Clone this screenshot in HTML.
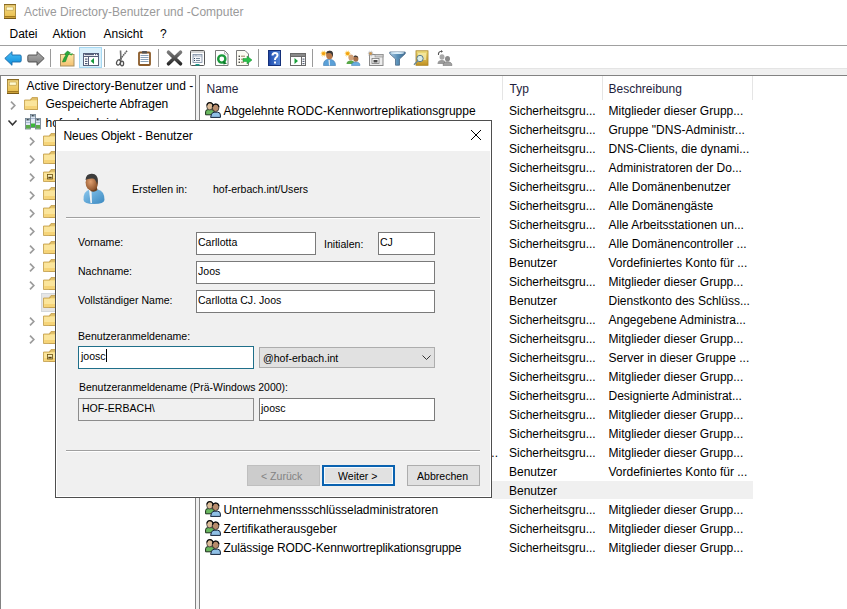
<!DOCTYPE html>
<html><head><meta charset="utf-8">
<style>
*{margin:0;padding:0;box-sizing:border-box}
html,body{width:847px;height:609px;overflow:hidden;background:#fff;font-family:"Liberation Sans",sans-serif;color:#000}
.a{position:absolute}
.x{position:absolute;white-space:nowrap}
svg{position:absolute;overflow:visible}
</style></head><body>
<svg style="left:4px;top:4px" width="12" height="15" viewBox="0 0 12 15">
<defs><linearGradient id="bk0" x1="0" y1="0" x2="0" y2="1"><stop offset="0" stop-color="#f6dc88"/><stop offset="1" stop-color="#e8bc48"/></linearGradient></defs>
<rect x="0.4" y="0.4" width="11.2" height="14.2" fill="url(#bk0)" stroke="#9a7a28" stroke-width="0.8"/>
<rect x="0" y="0" width="12" height="1.2" fill="#8a6a20"/>
<rect x="2.2" y="3" width="7" height="3.2" fill="#fffad0" stroke="#b89848" stroke-width="0.6"/>
<rect x="0.5" y="12" width="11" height="1.4" fill="#a07820"/>
<rect x="0" y="14" width="12" height="1" fill="#7a5a18"/>
</svg>
<div class="x" style="left:24px;top:5.84px;font-size:12px;line-height:12px;color:#9a9a9a;">Active Directory-Benutzer und -Computer</div>
<div class="x" style="left:9.5px;top:27.84px;font-size:12px;line-height:12px;">Datei</div>
<div class="x" style="left:52.5px;top:27.84px;font-size:12px;line-height:12px;">Aktion</div>
<div class="x" style="left:103.5px;top:27.84px;font-size:12px;line-height:12px;">Ansicht</div>
<div class="x" style="left:160px;top:27.84px;font-size:12px;line-height:12px;">?</div>
<div class="a" style="left:0;top:45px;width:847px;height:1px;background:#a0a0a0"></div>
<div class="a" style="left:79px;top:47px;width:23px;height:21px;background:#d9f0fb;border:1px solid #a6d8f2"></div>
<div class="a" style="left:50px;top:49px;width:1px;height:18px;background:#9a9a9a"></div>
<div class="a" style="left:104px;top:49px;width:1px;height:18px;background:#9a9a9a"></div>
<div class="a" style="left:158px;top:49px;width:1px;height:18px;background:#9a9a9a"></div>
<div class="a" style="left:258px;top:49px;width:1px;height:18px;background:#9a9a9a"></div>
<div class="a" style="left:312px;top:49px;width:1px;height:18px;background:#9a9a9a"></div>
<svg style="left:4px;top:51px" width="18" height="15" viewBox="0 0 18 15">
<defs><linearGradient id="ba" x1="0" y1="0" x2="0" y2="1"><stop offset="0" stop-color="#4cc0f8"/><stop offset="1" stop-color="#0a8ad8"/></linearGradient></defs>
<path d="M0.8 7.4 L8 0.7 V4 H16 Q17.2 4 17.2 5.2 V9.8 Q17.2 11 16 11 H8 V14.3 Z" fill="url(#ba)" stroke="#1a6aa8" stroke-width="0.9" stroke-linejoin="round"/>
</svg>
<svg style="left:27px;top:51px" width="18" height="15" viewBox="0 0 18 15">
<defs><linearGradient id="fa" x1="0" y1="0" x2="0" y2="1"><stop offset="0" stop-color="#b0b0b0"/><stop offset="1" stop-color="#7a7a7a"/></linearGradient></defs>
<path d="M17.2 7.4 L10 0.7 V4 H2 Q0.8 4 0.8 5.2 V9.8 Q0.8 11 2 11 H10 V14.3 Z" fill="url(#fa)" stroke="#4a4a4a" stroke-width="0.9" stroke-linejoin="round"/>
</svg>
<svg style="left:60px;top:50px" width="15" height="17" viewBox="0 0 15 17">
<defs><linearGradient id="uf1" x1="0" y1="0" x2="0" y2="1"><stop offset="0" stop-color="#fce9a8"/><stop offset="1" stop-color="#f4c070"/></linearGradient></defs>
<rect x="0.5" y="4.5" width="13.5" height="11.5" fill="url(#uf1)" stroke="#a89060"/>
<path d="M2.5 12 Q3.5 8 6 5 L4.8 3.8 L7.5 1 L10.5 3 L8.8 3.8 Q7 7 5.5 11.5 Z" fill="#2aaa3a" stroke="#138020" stroke-width="0.6"/>
<path d="M9 4.5 L13 3 L11.5 5.5 Z" fill="#2aaa3a"/>
</svg>
<svg style="left:83px;top:53px" width="16" height="13" viewBox="0 0 16 13">
<rect x="0.5" y="0.5" width="15" height="12" fill="#fff" stroke="#56607a"/>
<line x1="1.5" y1="1.6" x2="11" y2="1.6" stroke="#56607a" stroke-width="1.2"/>
<rect x="12" y="1" width="1.2" height="1.2" fill="#56607a"/><rect x="14" y="1" width="1" height="1.2" fill="#56607a"/>
<line x1="1" y1="3.5" x2="15" y2="3.5" stroke="#56607a"/>
<line x1="5.5" y1="4" x2="5.5" y2="12" stroke="#56607a"/>
<rect x="2" y="5.5" width="2.5" height="1.2" fill="#56607a"/><rect x="2" y="7.8" width="2.5" height="1.2" fill="#56607a"/><rect x="2" y="10" width="2.5" height="1.2" fill="#56607a"/>
<path d="M11 5 L7.6 8 L11 11 Z" fill="#12983a"/>
</svg>
<svg style="left:116px;top:50px" width="12" height="16" viewBox="0 0 12 16">
<path d="M4.5 0.5 L5 10.5" stroke="#707070" stroke-width="1.6" fill="none"/>
<path d="M11 0.8 L3.5 10" stroke="#606060" stroke-width="1.6" fill="none" stroke-dasharray="1.6 0.6"/>
<ellipse cx="2.5" cy="12.5" rx="1.9" ry="2.6" fill="none" stroke="#505050" stroke-width="1.3" transform="rotate(25 2.5 12.5)"/>
<ellipse cx="6" cy="13.5" rx="1.6" ry="2.3" fill="none" stroke="#505050" stroke-width="1.3"/>
</svg>
<svg style="left:138px;top:50px" width="13" height="16" viewBox="0 0 13 16">
<rect x="1" y="2.5" width="11" height="12.5" rx="0.8" fill="#fff" stroke="#8a5a28" stroke-width="1.8"/>
<rect x="4" y="1" width="5" height="2.6" rx="0.6" fill="#555"/>
<line x1="2.5" y1="5.5" x2="10.5" y2="5.5" stroke="#8aa2b8"/><line x1="2.5" y1="7.5" x2="10.5" y2="7.5" stroke="#8aa2b8"/><line x1="2.5" y1="9.5" x2="10.5" y2="9.5" stroke="#8aa2b8"/><line x1="2.5" y1="11.5" x2="10.5" y2="11.5" stroke="#8aa2b8"/>
</svg>
<svg style="left:166px;top:50px" width="17" height="16" viewBox="0 0 17 16">
<defs><linearGradient id="xg" x1="0" y1="0" x2="0" y2="1"><stop offset="0" stop-color="#7a7a7a"/><stop offset="1" stop-color="#2a2a2a"/></linearGradient></defs>
<path d="M2.5 2.2 L14.5 13.8 M14.5 2.2 L2.5 13.8" stroke="url(#xg)" stroke-width="3.6" stroke-linecap="round"/>
</svg>
<svg style="left:190px;top:50px" width="15" height="16" viewBox="0 0 15 16">
<rect x="0.5" y="0.5" width="14" height="15" rx="1" fill="#fff" stroke="#555"/>
<line x1="1" y1="2" x2="14" y2="2" stroke="#aaa"/>
<rect x="3" y="4.5" width="9" height="8" fill="#f4f6fa" stroke="#7a8aa0" stroke-width="0.8"/>
<line x1="6" y1="4.5" x2="6" y2="6" stroke="#7a8aa0" stroke-width="0.6"/><line x1="3" y1="6" x2="12" y2="6" stroke="#7a8aa0" stroke-width="0.6"/>
<rect x="4" y="8" width="1" height="1" fill="#345"/><rect x="4" y="10" width="1" height="1" fill="#345"/>
<line x1="6" y1="8.5" x2="10" y2="8.5" stroke="#789"/><line x1="6" y1="10.5" x2="10" y2="10.5" stroke="#789"/>
<rect x="5.5" y="14" width="4" height="1.6" fill="#1a9a8a"/>
</svg>
<svg style="left:215px;top:50px" width="14" height="16" viewBox="0 0 14 16">
<path d="M0.5 0.5 H9.5 L13 4 V15.5 H0.5 Z" fill="#fff" stroke="#7a7a7a"/>
<path d="M9.5 0.5 V4 H13" fill="none" stroke="#aaa" stroke-width="0.8"/>
<circle cx="6.8" cy="9" r="3.6" fill="none" stroke="#1a9a3a" stroke-width="2.4"/>
<path d="M8 10.5 L12 13.5 L8.5 14.5 Z" fill="#0a7a2a"/>
</svg>
<svg style="left:236px;top:50px" width="17" height="16" viewBox="0 0 17 16">
<path d="M0.5 0.5 H9 L12.5 4 V15.5 H0.5 Z" fill="#fdfcf4" stroke="#7a7a7a"/>
<rect x="2.6" y="5.6" width="1.3" height="1.3" fill="#222"/><rect x="2.6" y="8.6" width="1.3" height="1.3" fill="#222"/><rect x="2.6" y="11.6" width="1.3" height="1.3" fill="#222"/>
<line x1="5" y1="6.2" x2="9" y2="6.2" stroke="#a08060"/><line x1="5" y1="9.2" x2="8" y2="9.2" stroke="#a08060"/><line x1="5" y1="12.2" x2="8" y2="12.2" stroke="#a08060"/>
<path d="M7 8.5 H11 V6 L16 10 L11 14 V11.5 H7 Z" fill="#2ac048" stroke="#159030" stroke-width="0.5"/>
</svg>
<svg style="left:268px;top:50px" width="13" height="16" viewBox="0 0 13 16">
<defs><linearGradient id="hg" x1="0" y1="0" x2="1" y2="0"><stop offset="0" stop-color="#1a3a98"/><stop offset="0.25" stop-color="#2a5ab8"/><stop offset="1" stop-color="#5a8ad8"/></linearGradient></defs>
<rect x="0" y="0" width="13" height="16" fill="url(#hg)"/>
<rect x="0.5" y="0.5" width="12" height="15" fill="none" stroke="#14307a"/>
<path d="M4.5 5.5 Q4.5 3 7 3 Q9.5 3 9.5 5.3 Q9.5 6.8 8 7.6 Q7 8.2 7 10" fill="none" stroke="#fff" stroke-width="2"/>
<rect x="6" y="11.5" width="2" height="2" fill="#fff"/>
</svg>
<svg style="left:290px;top:53px" width="16" height="13" viewBox="0 0 16 13">
<rect x="0.5" y="0.5" width="15" height="12" fill="#fff" stroke="#6a6a6a"/>
<rect x="1" y="1" width="14" height="2" fill="#8a8a8a"/>
<line x1="1" y1="3.5" x2="15" y2="3.5" stroke="#6a6a6a"/>
<line x1="11.5" y1="4" x2="11.5" y2="12" stroke="#6a6a6a"/>
<rect x="12.5" y="5.5" width="2" height="1.2" fill="#5a6478"/><rect x="12.5" y="7.8" width="2" height="1.2" fill="#5a6478"/><rect x="12.5" y="10" width="2" height="1.2" fill="#5a6478"/>
<path d="M4.5 5 L8 8 L4.5 11 Z" fill="#1aa03a"/>
</svg>
<svg style="left:320px;top:50px" width="17" height="16" viewBox="0 0 17 16">
<path d="M3.5 15.5 Q3 9.5 9 9.2 Q15.5 9.5 15.5 15.5 Z" fill="#5aa0d8" stroke="#3a78b0" stroke-width="0.6"/>
<path d="M8.5 10 L9 15.5 L10 15.5 L9.8 10 Z" fill="#eee"/>
<ellipse cx="9.5" cy="5" rx="3.4" ry="4.2" fill="#b87848"/>
<path d="M6 4 Q6.5 0.5 10 0.8 Q13.5 1 13 5.5 L12.5 7 Q12 3 9.5 3 Q7 3 6 4 Z" fill="#3a3a3a"/>
<polygon points="7.20,3.60 5.04,4.07 6.51,5.72 4.49,4.82 4.71,7.02 3.60,5.11 2.49,7.02 2.71,4.82 0.69,5.72 2.16,4.07 0.00,3.60 2.16,3.13 0.69,1.48 2.71,2.38 2.49,0.18 3.60,2.09 4.71,0.18 4.49,2.38 6.51,1.48 5.04,3.13" fill="#f8b818"/><circle cx="3.6" cy="3.6" r="1.44" fill="#f09010" opacity="0.6"/>
</svg>
<svg style="left:344px;top:50px" width="17" height="16" viewBox="0 0 17 16">
<ellipse cx="7" cy="7.5" rx="2.6" ry="3" fill="#d0a078"/>
<path d="M2.5 14 Q2.5 10.5 7 10.5 Q10 10.5 10.5 13 V14 Z" fill="#58a848"/>
<ellipse cx="11.8" cy="8.8" rx="2.6" ry="3" fill="#a87048"/>
<path d="M7.5 15.5 Q7.5 12 11.8 12 Q16 12 16 15.5 Z" fill="#6aaee0" stroke="#3a78b0" stroke-width="0.5"/>
<path d="M9.5 7 Q10 5.5 11.8 5.6 Q14 5.8 14 8 Q13 6.8 11.5 6.8 Z" fill="#333"/>
<polygon points="7.20,3.60 5.04,4.07 6.51,5.72 4.49,4.82 4.71,7.02 3.60,5.11 2.49,7.02 2.71,4.82 0.69,5.72 2.16,4.07 0.00,3.60 2.16,3.13 0.69,1.48 2.71,2.38 2.49,0.18 3.60,2.09 4.71,0.18 4.49,2.38 6.51,1.48 5.04,3.13" fill="#f8b818"/><circle cx="3.6" cy="3.6" r="1.44" fill="#f09010" opacity="0.6"/>
</svg>
<svg style="left:367px;top:50px" width="17" height="16" viewBox="0 0 17 16">
<rect x="2.5" y="4.5" width="13.5" height="11" fill="#ececec" stroke="#8a8a8a"/>
<rect x="8" y="4.5" width="8" height="2.5" fill="#d0d0d0" stroke="#8a8a8a" stroke-width="0.6"/>
<rect x="5" y="8.5" width="7" height="5" fill="#f8f8f8" stroke="#7a7a7a" stroke-width="0.8"/>
<rect x="6.5" y="10" width="4" height="2.5" fill="#4a4a4a"/>
<polygon points="7.00,3.60 4.96,4.04 6.35,5.60 4.44,4.76 4.65,6.83 3.60,5.03 2.55,6.83 2.76,4.76 0.85,5.60 2.24,4.04 0.20,3.60 2.24,3.16 0.85,1.60 2.76,2.44 2.55,0.37 3.60,2.17 4.65,0.37 4.44,2.44 6.35,1.60 4.96,3.16" fill="#a0a0a0"/><circle cx="3.6" cy="3.6" r="1.36" fill="#f09010" opacity="0.6"/>
</svg>
<svg style="left:389px;top:51px" width="17" height="15" viewBox="0 0 17 15">
<defs><linearGradient id="flg" x1="0" y1="0" x2="1" y2="0"><stop offset="0" stop-color="#a8c8e0"/><stop offset="0.5" stop-color="#5a90b8"/><stop offset="1" stop-color="#3a6a90"/></linearGradient></defs>
<path d="M0.8 1 H16.2 V2.8 L10.5 8 V14.2 H6.5 V8 L0.8 2.8 Z" fill="url(#flg)" stroke="#4a6a88" stroke-width="0.8"/>
<ellipse cx="8.5" cy="2" rx="7" ry="0.9" fill="#d8ecf8"/>
</svg>
<svg style="left:413px;top:50px" width="16" height="16" viewBox="0 0 16 16">
<defs><linearGradient id="fdg" x1="0" y1="0" x2="0" y2="1"><stop offset="0" stop-color="#f0e080"/><stop offset="1" stop-color="#c09020"/></linearGradient></defs>
<rect x="3" y="0.8" width="12" height="14.5" fill="url(#fdg)" stroke="#a88020" stroke-width="0.8"/>
<rect x="5" y="3" width="8" height="7" fill="#f8f0b0" opacity="0.7"/>
<circle cx="7" cy="8.5" r="3.2" fill="#d8ece8" stroke="#5a7a8a" stroke-width="1"/>
<line x1="4.8" y1="10.8" x2="1" y2="14.8" stroke="#6a8a9a" stroke-width="1.3"/>
</svg>
<svg style="left:436px;top:50px" width="17" height="16" viewBox="0 0 17 16">
<path d="M2.5 5 Q2 1.5 5.5 1.2" fill="none" stroke="#555" stroke-width="1.1"/>
<path d="M5 0 L7 1.4 L5 2.8 Z" fill="#555"/>
<ellipse cx="6" cy="7" rx="2.5" ry="2.8" fill="#a8a8a8"/>
<path d="M1.5 14 Q1.5 10 6 10 Q9.5 10 9.5 13 V14 Z" fill="#9a9a9a"/>
<ellipse cx="11.5" cy="8.8" rx="2.5" ry="2.8" fill="#8a8a8a"/>
<path d="M7 15.5 Q7 11.8 11.5 11.8 Q16 11.8 16 15.5 Z" fill="#a0a0a0" stroke="#6a6a6a" stroke-width="0.5"/>
</svg>
<div class="a" style="left:0;top:68px;width:847px;height:7px;background:#f0f0f0;border-top:1px solid #e4e4e4"></div>
<div class="a" style="left:0;top:75px;width:196px;height:534px;border-left:1px solid #828282;border-top:1px solid #828282;border-right:1px solid #828282"></div>
<div class="a" style="left:196px;top:75px;width:3px;height:534px;background:#f0f0f0"></div>
<div class="a" style="left:199px;top:75px;width:648px;height:534px;border-left:1px solid #828282;border-top:1px solid #828282"></div>
<svg style="left:7px;top:79px" width="12" height="15" viewBox="0 0 12 15">
<defs><linearGradient id="bk" x1="0" y1="0" x2="0" y2="1"><stop offset="0" stop-color="#f6dc88"/><stop offset="1" stop-color="#e8bc48"/></linearGradient></defs>
<rect x="0.4" y="0.4" width="11.2" height="14.2" fill="url(#bk)" stroke="#9a7a28" stroke-width="0.8"/>
<rect x="0" y="0" width="12" height="1.2" fill="#8a6a20"/>
<rect x="2.2" y="3" width="7" height="3.2" fill="#fffad0" stroke="#b89848" stroke-width="0.6"/>
<rect x="0.5" y="12" width="11" height="1.4" fill="#a07820"/>
<rect x="0" y="14" width="12" height="1" fill="#7a5a18"/>
</svg>
<div class="x" style="left:26.5px;top:79.84px;font-size:12px;line-height:12px;">Active Directory-Benutzer und -</div>
<svg style="left:10px;top:101px" width="6" height="9" viewBox="0 0 6 9"><path d="M1 0.6 L4.8 4.5 L1 8.4" fill="none" stroke="#9c9c9c" stroke-width="1.7"/></svg>
<svg style="left:24px;top:97px" width="14" height="13" viewBox="0 0 14 13">
<path d="M6.5 2.5 L8 0.5 H13.5 V12.5 H6.5 Z" fill="#f2d27a" stroke="#c09a48" stroke-width="0.8"/>
<path d="M0.5 3 H6.5 L8 2 H13.5 V12.5 H0.5 Z" fill="#f7dc86" stroke="#c09a48" stroke-width="0.8"/>
<rect x="1.2" y="4" width="11.6" height="8" fill="#fbe59c"/>
<rect x="1.2" y="9" width="11.6" height="3" fill="#f6d478"/></svg>
<div class="x" style="left:45.5px;top:97.84px;font-size:12px;line-height:12px;">Gespeicherte Abfragen</div>
<svg style="left:8px;top:120px" width="9" height="6" viewBox="0 0 9 6"><path d="M0.5 0.5 L4.5 4.8 L8.5 0.5" fill="none" stroke="#333" stroke-width="1.5"/></svg>
<svg style="left:25px;top:114px" width="16" height="16" viewBox="0 0 16 16">
<g stroke="#6a7a88" stroke-width="0.8">
<rect x="0.5" y="4.5" width="5" height="10.5" fill="#dfe8f4"/>
<rect x="10.5" y="4.5" width="5" height="10.5" fill="#dfe8f4"/>
<rect x="5.5" y="0.5" width="5" height="13" fill="#dfe8f4"/>
</g>
<rect x="1" y="5" width="4" height="1.6" fill="#8aa0b0"/><rect x="11" y="5" width="4" height="1.6" fill="#8aa0b0"/><rect x="6" y="1" width="4" height="1.6" fill="#8aa0b0"/>
<rect x="2" y="5.3" width="1.6" height="0.9" fill="#222"/><rect x="12" y="5.3" width="1.6" height="0.9" fill="#222"/><rect x="7" y="1.3" width="1.6" height="0.9" fill="#222"/>
<rect x="1" y="8" width="4" height="1" fill="#a8b8d0"/><rect x="11" y="8" width="4" height="1" fill="#a8b8d0"/><rect x="6" y="4" width="4" height="1" fill="#a8b8d0"/>
<rect x="1" y="11" width="4" height="3.6" fill="#5aaa48"/><rect x="11" y="11" width="4" height="3.6" fill="#5aaa48"/><rect x="6" y="9.5" width="4" height="3.6" fill="#3ab838"/>
</svg>
<div class="x" style="left:45.5px;top:116.64px;font-size:12px;line-height:12px;">hof-erbach.int</div>
<svg style="left:29px;top:137px" width="6" height="9" viewBox="0 0 6 9"><path d="M1 0.6 L4.8 4.5 L1 8.4" fill="none" stroke="#9c9c9c" stroke-width="1.7"/></svg>
<svg style="left:43px;top:133px" width="14" height="13" viewBox="0 0 14 13">
<path d="M6.5 2.5 L8 0.5 H13.5 V12.5 H6.5 Z" fill="#f2d27a" stroke="#c09a48" stroke-width="0.8"/>
<path d="M0.5 3 H6.5 L8 2 H13.5 V12.5 H0.5 Z" fill="#f7dc86" stroke="#c09a48" stroke-width="0.8"/>
<rect x="1.2" y="4" width="11.6" height="8" fill="#fbe59c"/>
<rect x="1.2" y="9" width="11.6" height="3" fill="#f6d478"/></svg>
<svg style="left:29px;top:155px" width="6" height="9" viewBox="0 0 6 9"><path d="M1 0.6 L4.8 4.5 L1 8.4" fill="none" stroke="#9c9c9c" stroke-width="1.7"/></svg>
<svg style="left:43px;top:151px" width="14" height="13" viewBox="0 0 14 13">
<path d="M6.5 2.5 L8 0.5 H13.5 V12.5 H6.5 Z" fill="#f2d27a" stroke="#c09a48" stroke-width="0.8"/>
<path d="M0.5 3 H6.5 L8 2 H13.5 V12.5 H0.5 Z" fill="#f7dc86" stroke="#c09a48" stroke-width="0.8"/>
<rect x="1.2" y="4" width="11.6" height="8" fill="#fbe59c"/>
<rect x="1.2" y="9" width="11.6" height="3" fill="#f6d478"/></svg>
<svg style="left:29px;top:173px" width="6" height="9" viewBox="0 0 6 9"><path d="M1 0.6 L4.8 4.5 L1 8.4" fill="none" stroke="#9c9c9c" stroke-width="1.7"/></svg>
<svg style="left:43px;top:169px" width="14" height="13" viewBox="0 0 14 13">
<path d="M6.5 2.5 L8 0.5 H13.5 V12.5 H6.5 Z" fill="#f2d27a" stroke="#c09a48" stroke-width="0.8"/>
<path d="M0.5 3 H6.5 L8 2 H13.5 V12.5 H0.5 Z" fill="#f7dc86" stroke="#c09a48" stroke-width="0.8"/>
<rect x="1.2" y="4" width="11.6" height="8" fill="#fbe59c"/>
<rect x="1.2" y="9" width="11.6" height="3" fill="#f6d478"/><rect x="4.5" y="5.5" width="5" height="4.5" fill="#f8f0c0" stroke="#6a5010" stroke-width="0.8"/><rect x="5.3" y="7.8" width="3.4" height="1.6" fill="#5a4010"/></svg>
<svg style="left:29px;top:191px" width="6" height="9" viewBox="0 0 6 9"><path d="M1 0.6 L4.8 4.5 L1 8.4" fill="none" stroke="#9c9c9c" stroke-width="1.7"/></svg>
<svg style="left:43px;top:187px" width="14" height="13" viewBox="0 0 14 13">
<path d="M6.5 2.5 L8 0.5 H13.5 V12.5 H6.5 Z" fill="#f2d27a" stroke="#c09a48" stroke-width="0.8"/>
<path d="M0.5 3 H6.5 L8 2 H13.5 V12.5 H0.5 Z" fill="#f7dc86" stroke="#c09a48" stroke-width="0.8"/>
<rect x="1.2" y="4" width="11.6" height="8" fill="#fbe59c"/>
<rect x="1.2" y="9" width="11.6" height="3" fill="#f6d478"/></svg>
<svg style="left:29px;top:209px" width="6" height="9" viewBox="0 0 6 9"><path d="M1 0.6 L4.8 4.5 L1 8.4" fill="none" stroke="#9c9c9c" stroke-width="1.7"/></svg>
<svg style="left:43px;top:205px" width="14" height="13" viewBox="0 0 14 13">
<path d="M6.5 2.5 L8 0.5 H13.5 V12.5 H6.5 Z" fill="#f2d27a" stroke="#c09a48" stroke-width="0.8"/>
<path d="M0.5 3 H6.5 L8 2 H13.5 V12.5 H0.5 Z" fill="#f7dc86" stroke="#c09a48" stroke-width="0.8"/>
<rect x="1.2" y="4" width="11.6" height="8" fill="#fbe59c"/>
<rect x="1.2" y="9" width="11.6" height="3" fill="#f6d478"/></svg>
<svg style="left:29px;top:227px" width="6" height="9" viewBox="0 0 6 9"><path d="M1 0.6 L4.8 4.5 L1 8.4" fill="none" stroke="#9c9c9c" stroke-width="1.7"/></svg>
<svg style="left:43px;top:223px" width="14" height="13" viewBox="0 0 14 13">
<path d="M6.5 2.5 L8 0.5 H13.5 V12.5 H6.5 Z" fill="#f2d27a" stroke="#c09a48" stroke-width="0.8"/>
<path d="M0.5 3 H6.5 L8 2 H13.5 V12.5 H0.5 Z" fill="#f7dc86" stroke="#c09a48" stroke-width="0.8"/>
<rect x="1.2" y="4" width="11.6" height="8" fill="#fbe59c"/>
<rect x="1.2" y="9" width="11.6" height="3" fill="#f6d478"/></svg>
<svg style="left:29px;top:245px" width="6" height="9" viewBox="0 0 6 9"><path d="M1 0.6 L4.8 4.5 L1 8.4" fill="none" stroke="#9c9c9c" stroke-width="1.7"/></svg>
<svg style="left:43px;top:241px" width="14" height="13" viewBox="0 0 14 13">
<path d="M6.5 2.5 L8 0.5 H13.5 V12.5 H6.5 Z" fill="#f2d27a" stroke="#c09a48" stroke-width="0.8"/>
<path d="M0.5 3 H6.5 L8 2 H13.5 V12.5 H0.5 Z" fill="#f7dc86" stroke="#c09a48" stroke-width="0.8"/>
<rect x="1.2" y="4" width="11.6" height="8" fill="#fbe59c"/>
<rect x="1.2" y="9" width="11.6" height="3" fill="#f6d478"/></svg>
<svg style="left:29px;top:263px" width="6" height="9" viewBox="0 0 6 9"><path d="M1 0.6 L4.8 4.5 L1 8.4" fill="none" stroke="#9c9c9c" stroke-width="1.7"/></svg>
<svg style="left:43px;top:259px" width="14" height="13" viewBox="0 0 14 13">
<path d="M6.5 2.5 L8 0.5 H13.5 V12.5 H6.5 Z" fill="#f2d27a" stroke="#c09a48" stroke-width="0.8"/>
<path d="M0.5 3 H6.5 L8 2 H13.5 V12.5 H0.5 Z" fill="#f7dc86" stroke="#c09a48" stroke-width="0.8"/>
<rect x="1.2" y="4" width="11.6" height="8" fill="#fbe59c"/>
<rect x="1.2" y="9" width="11.6" height="3" fill="#f6d478"/></svg>
<svg style="left:29px;top:281px" width="6" height="9" viewBox="0 0 6 9"><path d="M1 0.6 L4.8 4.5 L1 8.4" fill="none" stroke="#9c9c9c" stroke-width="1.7"/></svg>
<svg style="left:43px;top:277px" width="14" height="13" viewBox="0 0 14 13">
<path d="M6.5 2.5 L8 0.5 H13.5 V12.5 H6.5 Z" fill="#f2d27a" stroke="#c09a48" stroke-width="0.8"/>
<path d="M0.5 3 H6.5 L8 2 H13.5 V12.5 H0.5 Z" fill="#f7dc86" stroke="#c09a48" stroke-width="0.8"/>
<rect x="1.2" y="4" width="11.6" height="8" fill="#fbe59c"/>
<rect x="1.2" y="9" width="11.6" height="3" fill="#f6d478"/></svg>
<div class="a" style="left:41px;top:293px;width:40px;height:19px;background:#e6e6e6;border:1px solid #d4d8dc"></div>
<svg style="left:43px;top:295px" width="14" height="13" viewBox="0 0 14 13">
<path d="M6.5 2.5 L8 0.5 H13.5 V12.5 H6.5 Z" fill="#f2d27a" stroke="#c09a48" stroke-width="0.8"/>
<path d="M0.5 3 H6.5 L8 2 H13.5 V12.5 H0.5 Z" fill="#f7dc86" stroke="#c09a48" stroke-width="0.8"/>
<rect x="1.2" y="4" width="11.6" height="8" fill="#fbe59c"/>
<rect x="1.2" y="9" width="11.6" height="3" fill="#f6d478"/></svg>
<svg style="left:29px;top:317px" width="6" height="9" viewBox="0 0 6 9"><path d="M1 0.6 L4.8 4.5 L1 8.4" fill="none" stroke="#9c9c9c" stroke-width="1.7"/></svg>
<svg style="left:43px;top:313px" width="14" height="13" viewBox="0 0 14 13">
<path d="M6.5 2.5 L8 0.5 H13.5 V12.5 H6.5 Z" fill="#f2d27a" stroke="#c09a48" stroke-width="0.8"/>
<path d="M0.5 3 H6.5 L8 2 H13.5 V12.5 H0.5 Z" fill="#f7dc86" stroke="#c09a48" stroke-width="0.8"/>
<rect x="1.2" y="4" width="11.6" height="8" fill="#fbe59c"/>
<rect x="1.2" y="9" width="11.6" height="3" fill="#f6d478"/></svg>
<svg style="left:29px;top:335px" width="6" height="9" viewBox="0 0 6 9"><path d="M1 0.6 L4.8 4.5 L1 8.4" fill="none" stroke="#9c9c9c" stroke-width="1.7"/></svg>
<svg style="left:43px;top:331px" width="14" height="13" viewBox="0 0 14 13">
<path d="M6.5 2.5 L8 0.5 H13.5 V12.5 H6.5 Z" fill="#f2d27a" stroke="#c09a48" stroke-width="0.8"/>
<path d="M0.5 3 H6.5 L8 2 H13.5 V12.5 H0.5 Z" fill="#f7dc86" stroke="#c09a48" stroke-width="0.8"/>
<rect x="1.2" y="4" width="11.6" height="8" fill="#fbe59c"/>
<rect x="1.2" y="9" width="11.6" height="3" fill="#f6d478"/></svg>
<svg style="left:43px;top:349px" width="14" height="13" viewBox="0 0 14 13">
<path d="M6.5 2.5 L8 0.5 H13.5 V12.5 H6.5 Z" fill="#f2d27a" stroke="#c09a48" stroke-width="0.8"/>
<path d="M0.5 3 H6.5 L8 2 H13.5 V12.5 H0.5 Z" fill="#f7dc86" stroke="#c09a48" stroke-width="0.8"/>
<rect x="1.2" y="4" width="11.6" height="8" fill="#fbe59c"/>
<rect x="1.2" y="9" width="11.6" height="3" fill="#f6d478"/><rect x="4.5" y="5.5" width="5" height="4.5" fill="#f8f0c0" stroke="#6a5010" stroke-width="0.8"/><rect x="5.3" y="7.8" width="3.4" height="1.6" fill="#5a4010"/></svg>
<div class="a" style="left:200px;top:76px;width:647px;height:24px;background:#fff"></div>
<div class="a" style="left:502px;top:76px;width:1px;height:24px;background:#e5e5e5"></div>
<div class="a" style="left:602px;top:76px;width:1px;height:24px;background:#e5e5e5"></div>
<div class="a" style="left:752px;top:76px;width:1px;height:24px;background:#e5e5e5"></div>
<div class="x" style="left:206.5px;top:82.84px;font-size:12px;line-height:12px;color:#1e1e3c;">Name</div>
<div class="x" style="left:509.5px;top:82.84px;font-size:12px;line-height:12px;color:#1e1e3c;">Typ</div>
<div class="x" style="left:608.5px;top:82.84px;font-size:12px;line-height:12px;color:#1e1e3c;">Beschreibung</div>
<svg style="left:205px;top:102px" width="16" height="16" viewBox="0 0 16 16">
<path d="M0.6 12.8 V9.8 Q0.6 7.6 3 7.6 H7 Q9.4 7.6 9.4 9.8 V12.8 Z" fill="#6ab860" stroke="#1a2e1a" stroke-width="1"/>
<ellipse cx="4.8" cy="4.2" rx="3.1" ry="3.7" fill="#dcbc98" stroke="#3a3a3a" stroke-width="0.8"/>
<path d="M1.8 3.5 Q2.5 0.5 5 0.6 Q7.5 0.8 7.9 3.2" fill="none" stroke="#111" stroke-width="1.1"/>
<path d="M5.6 15.4 L6.5 12.2 Q7.3 10.2 9.5 10.2 H12.5 Q15.4 10.3 15.4 13 V15.4 Z" fill="#90c0e6" stroke="#14243c" stroke-width="1"/>
<ellipse cx="10.6" cy="5.8" rx="3.3" ry="3.8" fill="#b88c6c" stroke="#2a2a2a" stroke-width="0.8"/>
<path d="M7.4 5 Q8 2 10.8 2 Q13.6 2.1 14 5.2" fill="none" stroke="#111" stroke-width="1.2"/>
</svg>
<div class="x" style="left:223.5px;top:104.54px;font-size:12px;line-height:12px;">Abgelehnte RODC-Kennwortreplikationsgruppe</div>
<div class="x" style="left:509px;top:104.54px;font-size:12px;line-height:12px;">Sicherheitsgru...</div>
<div class="x" style="left:608.5px;top:104.54px;font-size:12px;line-height:12px;">Mitglieder dieser Grupp...</div>
<div class="x" style="left:509px;top:123.54px;font-size:12px;line-height:12px;">Sicherheitsgru...</div>
<div class="x" style="left:608.5px;top:123.54px;font-size:12px;line-height:12px;">Gruppe "DNS-Administr...</div>
<div class="x" style="left:509px;top:142.54px;font-size:12px;line-height:12px;">Sicherheitsgru...</div>
<div class="x" style="left:608.5px;top:142.54px;font-size:12px;line-height:12px;">DNS-Clients, die dynami...</div>
<div class="x" style="left:509px;top:161.54px;font-size:12px;line-height:12px;">Sicherheitsgru...</div>
<div class="x" style="left:608.5px;top:161.54px;font-size:12px;line-height:12px;">Administratoren der Do...</div>
<div class="x" style="left:509px;top:180.54px;font-size:12px;line-height:12px;">Sicherheitsgru...</div>
<div class="x" style="left:608.5px;top:180.54px;font-size:12px;line-height:12px;">Alle Domänenbenutzer</div>
<div class="x" style="left:509px;top:199.54px;font-size:12px;line-height:12px;">Sicherheitsgru...</div>
<div class="x" style="left:608.5px;top:199.54px;font-size:12px;line-height:12px;">Alle Domänengäste</div>
<div class="x" style="left:509px;top:218.54px;font-size:12px;line-height:12px;">Sicherheitsgru...</div>
<div class="x" style="left:608.5px;top:218.54px;font-size:12px;line-height:12px;">Alle Arbeitsstationen un...</div>
<div class="x" style="left:509px;top:237.54px;font-size:12px;line-height:12px;">Sicherheitsgru...</div>
<div class="x" style="left:608.5px;top:237.54px;font-size:12px;line-height:12px;">Alle Domänencontroller ...</div>
<div class="x" style="left:509px;top:256.54px;font-size:12px;line-height:12px;">Benutzer</div>
<div class="x" style="left:608.5px;top:256.54px;font-size:12px;line-height:12px;">Vordefiniertes Konto für ...</div>
<div class="x" style="left:509px;top:275.54px;font-size:12px;line-height:12px;">Sicherheitsgru...</div>
<div class="x" style="left:608.5px;top:275.54px;font-size:12px;line-height:12px;">Mitglieder dieser Grupp...</div>
<div class="x" style="left:509px;top:294.54px;font-size:12px;line-height:12px;">Benutzer</div>
<div class="x" style="left:608.5px;top:294.54px;font-size:12px;line-height:12px;">Dienstkonto des Schlüss...</div>
<div class="x" style="left:509px;top:313.54px;font-size:12px;line-height:12px;">Sicherheitsgru...</div>
<div class="x" style="left:608.5px;top:313.54px;font-size:12px;line-height:12px;">Angegebene Administra...</div>
<div class="x" style="left:509px;top:332.54px;font-size:12px;line-height:12px;">Sicherheitsgru...</div>
<div class="x" style="left:608.5px;top:332.54px;font-size:12px;line-height:12px;">Mitglieder dieser Grupp...</div>
<div class="x" style="left:509px;top:351.54px;font-size:12px;line-height:12px;">Sicherheitsgru...</div>
<div class="x" style="left:608.5px;top:351.54px;font-size:12px;line-height:12px;">Server in dieser Gruppe ...</div>
<div class="x" style="left:509px;top:370.54px;font-size:12px;line-height:12px;">Sicherheitsgru...</div>
<div class="x" style="left:608.5px;top:370.54px;font-size:12px;line-height:12px;">Mitglieder dieser Grupp...</div>
<div class="x" style="left:509px;top:389.54px;font-size:12px;line-height:12px;">Sicherheitsgru...</div>
<div class="x" style="left:608.5px;top:389.54px;font-size:12px;line-height:12px;">Designierte Administrat...</div>
<div class="x" style="left:509px;top:408.54px;font-size:12px;line-height:12px;">Sicherheitsgru...</div>
<div class="x" style="left:608.5px;top:408.54px;font-size:12px;line-height:12px;">Mitglieder dieser Grupp...</div>
<div class="x" style="left:509px;top:427.54px;font-size:12px;line-height:12px;">Sicherheitsgru...</div>
<div class="x" style="left:608.5px;top:427.54px;font-size:12px;line-height:12px;">Mitglieder dieser Grupp...</div>
<div class="x" style="left:488px;top:446.54px;font-size:12px;line-height:12px;">...</div>
<div class="x" style="left:509px;top:446.54px;font-size:12px;line-height:12px;">Sicherheitsgru...</div>
<div class="x" style="left:608.5px;top:446.54px;font-size:12px;line-height:12px;">Mitglieder dieser Grupp...</div>
<div class="x" style="left:509px;top:465.54px;font-size:12px;line-height:12px;">Benutzer</div>
<div class="x" style="left:608.5px;top:465.54px;font-size:12px;line-height:12px;">Vordefiniertes Konto für ...</div>
<div class="a" style="left:492px;top:481px;width:261px;height:18px;background:#f0f0f0"></div>
<div class="x" style="left:509px;top:484.54px;font-size:12px;line-height:12px;">Benutzer</div>
<svg style="left:205px;top:501px" width="16" height="16" viewBox="0 0 16 16">
<path d="M0.6 12.8 V9.8 Q0.6 7.6 3 7.6 H7 Q9.4 7.6 9.4 9.8 V12.8 Z" fill="#6ab860" stroke="#1a2e1a" stroke-width="1"/>
<ellipse cx="4.8" cy="4.2" rx="3.1" ry="3.7" fill="#dcbc98" stroke="#3a3a3a" stroke-width="0.8"/>
<path d="M1.8 3.5 Q2.5 0.5 5 0.6 Q7.5 0.8 7.9 3.2" fill="none" stroke="#111" stroke-width="1.1"/>
<path d="M5.6 15.4 L6.5 12.2 Q7.3 10.2 9.5 10.2 H12.5 Q15.4 10.3 15.4 13 V15.4 Z" fill="#90c0e6" stroke="#14243c" stroke-width="1"/>
<ellipse cx="10.6" cy="5.8" rx="3.3" ry="3.8" fill="#b88c6c" stroke="#2a2a2a" stroke-width="0.8"/>
<path d="M7.4 5 Q8 2 10.8 2 Q13.6 2.1 14 5.2" fill="none" stroke="#111" stroke-width="1.2"/>
</svg>
<div class="x" style="left:223.5px;top:503.54px;font-size:12px;line-height:12px;letter-spacing:-0.06px;">Unternehmenssschlüsseladministratoren</div>
<div class="x" style="left:509px;top:503.54px;font-size:12px;line-height:12px;">Sicherheitsgru...</div>
<div class="x" style="left:608.5px;top:503.54px;font-size:12px;line-height:12px;">Mitglieder dieser Grupp...</div>
<svg style="left:205px;top:520px" width="16" height="16" viewBox="0 0 16 16">
<path d="M0.6 12.8 V9.8 Q0.6 7.6 3 7.6 H7 Q9.4 7.6 9.4 9.8 V12.8 Z" fill="#6ab860" stroke="#1a2e1a" stroke-width="1"/>
<ellipse cx="4.8" cy="4.2" rx="3.1" ry="3.7" fill="#dcbc98" stroke="#3a3a3a" stroke-width="0.8"/>
<path d="M1.8 3.5 Q2.5 0.5 5 0.6 Q7.5 0.8 7.9 3.2" fill="none" stroke="#111" stroke-width="1.1"/>
<path d="M5.6 15.4 L6.5 12.2 Q7.3 10.2 9.5 10.2 H12.5 Q15.4 10.3 15.4 13 V15.4 Z" fill="#90c0e6" stroke="#14243c" stroke-width="1"/>
<ellipse cx="10.6" cy="5.8" rx="3.3" ry="3.8" fill="#b88c6c" stroke="#2a2a2a" stroke-width="0.8"/>
<path d="M7.4 5 Q8 2 10.8 2 Q13.6 2.1 14 5.2" fill="none" stroke="#111" stroke-width="1.2"/>
</svg>
<div class="x" style="left:223.5px;top:522.54px;font-size:12px;line-height:12px;">Zertifikatherausgeber</div>
<div class="x" style="left:509px;top:522.54px;font-size:12px;line-height:12px;">Sicherheitsgru...</div>
<div class="x" style="left:608.5px;top:522.54px;font-size:12px;line-height:12px;">Mitglieder dieser Grupp...</div>
<svg style="left:205px;top:539px" width="16" height="16" viewBox="0 0 16 16">
<path d="M0.6 12.8 V9.8 Q0.6 7.6 3 7.6 H7 Q9.4 7.6 9.4 9.8 V12.8 Z" fill="#6ab860" stroke="#1a2e1a" stroke-width="1"/>
<ellipse cx="4.8" cy="4.2" rx="3.1" ry="3.7" fill="#dcbc98" stroke="#3a3a3a" stroke-width="0.8"/>
<path d="M1.8 3.5 Q2.5 0.5 5 0.6 Q7.5 0.8 7.9 3.2" fill="none" stroke="#111" stroke-width="1.1"/>
<path d="M5.6 15.4 L6.5 12.2 Q7.3 10.2 9.5 10.2 H12.5 Q15.4 10.3 15.4 13 V15.4 Z" fill="#90c0e6" stroke="#14243c" stroke-width="1"/>
<ellipse cx="10.6" cy="5.8" rx="3.3" ry="3.8" fill="#b88c6c" stroke="#2a2a2a" stroke-width="0.8"/>
<path d="M7.4 5 Q8 2 10.8 2 Q13.6 2.1 14 5.2" fill="none" stroke="#111" stroke-width="1.2"/>
</svg>
<div class="x" style="left:223.5px;top:541.54px;font-size:12px;line-height:12px;letter-spacing:-0.12px;">Zulässige RODC-Kennwortreplikationsgruppe</div>
<div class="x" style="left:509px;top:541.54px;font-size:12px;line-height:12px;">Sicherheitsgru...</div>
<div class="x" style="left:608.5px;top:541.54px;font-size:12px;line-height:12px;">Mitglieder dieser Grupp...</div>
<div class="a" style="left:55px;top:120px;width:437px;height:378px;background:#fff;border:1px solid #4e4e4e"></div>
<div class="a" style="left:57px;top:151px;width:433px;height:345px;background:#f0f0f0"></div>
<div class="x" style="left:63.5px;top:129.84px;font-size:12px;line-height:12px;letter-spacing:-0.1px;">Neues Objekt - Benutzer</div>
<svg style="left:471px;top:130px" width="10" height="10" viewBox="0 0 10 10"><path d="M0 0 L10 10 M10 0 L0 10" stroke="#000" stroke-width="1"/></svg>
<svg style="left:82px;top:172px" width="24" height="33" viewBox="0 0 24 33">
<defs><linearGradient id="ub" x1="0" y1="0" x2="1" y2="1"><stop offset="0" stop-color="#8cc8ee"/><stop offset="1" stop-color="#3a88c0"/></linearGradient>
<radialGradient id="uf" cx="0.4" cy="0.45" r="0.6"><stop offset="0" stop-color="#e0a070"/><stop offset="1" stop-color="#8a5028"/></radialGradient></defs>
<path d="M1.5 28 Q1 19 8 17.5 L16 17.5 Q22.5 19 22.5 28 Q22 32 12 32 Q2 32 1.5 28 Z" fill="url(#ub)"/>
<path d="M7 18 L8.5 31 L10 31 L9.5 18 Z" fill="#f4f4f4"/>
<path d="M8 14 L8.5 19 Q12 21 15.5 18 L14.5 14 Z" fill="#6a4020"/>
<ellipse cx="9.8" cy="10.5" rx="6.2" ry="8" fill="url(#uf)"/>
<path d="M3.5 8 Q4 1.5 10 1.8 Q16 2 15.8 9 L15 13 Q14 7 11 6.5 Q6 6 3.5 8 Z" fill="#3c3c3c"/>
</svg>
<div class="x" style="left:131.5px;top:184.11px;font-size:11.8px;line-height:11.8px;transform:scaleX(0.895);transform-origin:0 0;">Erstellen in:</div>
<div class="x" style="left:213.0px;top:184.11px;font-size:11.8px;line-height:11.8px;transform:scaleX(0.895);transform-origin:0 0;">hof-erbach.int/Users</div>
<div class="a" style="left:66px;top:217px;width:414px;height:1px;background:#a0a0a0"></div>
<div class="a" style="left:66px;top:218px;width:414px;height:1px;background:#fff"></div>
<div class="x" style="left:78.0px;top:236.61px;font-size:11.8px;line-height:11.8px;transform:scaleX(0.895);transform-origin:0 0;">Vorname:</div>
<div class="a" style="left:196px;top:232px;width:120px;height:23px;background:#fff;border:1px solid #7a7a7a"></div>
<div class="x" style="left:198.0px;top:236.61px;font-size:11.8px;line-height:11.8px;transform:scaleX(0.895);transform-origin:0 0;">Carllotta</div>
<div class="x" style="left:323.5px;top:238.61px;font-size:11.8px;line-height:11.8px;transform:scaleX(0.895);transform-origin:0 0;">Initialen:</div>
<div class="a" style="left:378px;top:232px;width:57px;height:23px;background:#fff;border:1px solid #7a7a7a"></div>
<div class="x" style="left:380.0px;top:236.61px;font-size:11.8px;line-height:11.8px;transform:scaleX(0.895);transform-origin:0 0;">CJ</div>
<div class="x" style="left:78.0px;top:265.61px;font-size:11.8px;line-height:11.8px;transform:scaleX(0.895);transform-origin:0 0;">Nachname:</div>
<div class="a" style="left:196px;top:261px;width:239px;height:23px;background:#fff;border:1px solid #7a7a7a"></div>
<div class="x" style="left:198.0px;top:265.61px;font-size:11.8px;line-height:11.8px;transform:scaleX(0.895);transform-origin:0 0;">Joos</div>
<div class="x" style="left:78.0px;top:295.11px;font-size:11.8px;line-height:11.8px;transform:scaleX(0.895);transform-origin:0 0;">Vollständiger Name:</div>
<div class="a" style="left:196px;top:290px;width:239px;height:23px;background:#fff;border:1px solid #7a7a7a"></div>
<div class="x" style="left:198.0px;top:295.11px;font-size:11.8px;line-height:11.8px;transform:scaleX(0.895);transform-origin:0 0;">Carllotta CJ. Joos</div>
<div class="x" style="left:78.0px;top:330.61px;font-size:11.8px;line-height:11.8px;transform:scaleX(0.895);transform-origin:0 0;">Benutzeranmeldename:</div>
<div class="a" style="left:78px;top:346px;width:176px;height:23px;background:#fff;border:1px solid #1f6f8a"></div>
<div class="x" style="left:80.5px;top:351.11px;font-size:11.8px;line-height:11.8px;transform:scaleX(0.895);transform-origin:0 0;">joosc</div>
<div class="a" style="left:106px;top:349px;width:1px;height:13px;background:#000"></div>
<div class="a" style="left:259px;top:347px;width:176px;height:21px;background:#e1e1e1;border:1px solid #adadad"></div>
<div class="x" style="left:262.5px;top:352.61px;font-size:11.8px;line-height:11.8px;transform:scaleX(0.895);transform-origin:0 0;">@hof-erbach.int</div>
<svg style="left:422px;top:355px" width="9" height="5" viewBox="0 0 9 5"><path d="M0.5 0.5 L4.5 4.5 L8.5 0.5" fill="none" stroke="#333" stroke-width="1"/></svg>
<div class="x" style="left:78.5px;top:381.61px;font-size:11.8px;line-height:11.8px;transform:scaleX(0.885);transform-origin:0 0;">Benutzeranmeldename (Prä-Windows 2000):</div>
<div class="a" style="left:78px;top:398px;width:176px;height:23px;background:#f0f0f0;border:1px solid #8c8c8c"></div>
<div class="x" style="left:81.5px;top:402.61px;font-size:11.8px;line-height:11.8px;transform:scaleX(0.895);transform-origin:0 0;">HOF-ERBACH\</div>
<div class="a" style="left:259px;top:398px;width:176px;height:23px;background:#fff;border:1px solid #7a7a7a"></div>
<div class="x" style="left:261.0px;top:402.61px;font-size:11.8px;line-height:11.8px;transform:scaleX(0.895);transform-origin:0 0;">joosc</div>
<div class="a" style="left:66px;top:450px;width:414px;height:1px;background:#a0a0a0"></div>
<div class="a" style="left:66px;top:451px;width:414px;height:1px;background:#fff"></div>
<div class="a" style="left:247px;top:465px;width:73px;height:21px;background:#cccccc;border:1px solid #bfbfbf"></div>
<div class="x" style="left:260.5px;top:470.61px;font-size:11.8px;line-height:11.8px;color:#838383;transform:scaleX(0.895);transform-origin:0 0;">&lt; Zurück</div>
<div class="a" style="left:322px;top:465px;width:73px;height:21px;background:#e1e1e1;border:2px solid #0a62b0;box-shadow:inset 0 0 0 1px #f4fbff"></div>
<div class="x" style="left:337.5px;top:470.61px;font-size:11.8px;line-height:11.8px;transform:scaleX(0.895);transform-origin:0 0;">Weiter &gt;</div>
<div class="a" style="left:407px;top:465px;width:73px;height:21px;background:#e1e1e1;border:1px solid #adadad"></div>
<div class="x" style="left:416.5px;top:470.61px;font-size:11.8px;line-height:11.8px;transform:scaleX(0.895);transform-origin:0 0;">Abbrechen</div>
</body></html>
